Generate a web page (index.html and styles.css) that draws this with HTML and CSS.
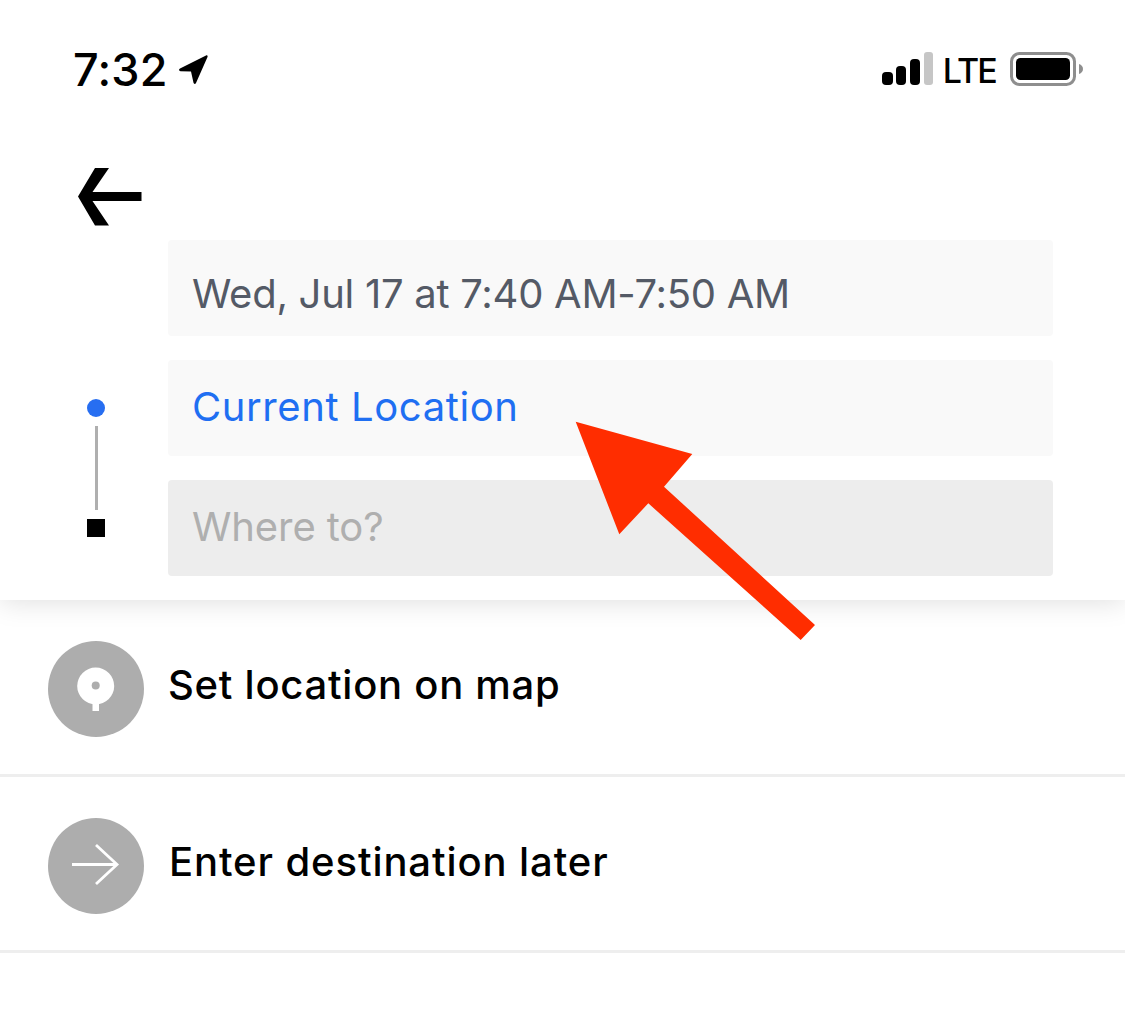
FILE: index.html
```html
<!DOCTYPE html>
<html lang="en">
<head>
<meta charset="utf-8">
<title>Where to?</title>
<link rel="stylesheet" href="styles.css">
</head>
<body>
<div class="page">
  <header class="top">
    <div class="status">
      <div class="status-left">
        <span class="time">7:32</span>
        <svg class="loc" width="32" height="32" viewBox="0 0 32 32"><path d="M3 15.500 29 2.500c1.200-.6 2 .2 1.500 1.500L19 30c-.6 1.300-2.200 1.200-2.500-.2L14 18.500 3.500 18.200c-1.700-.1-2-1.900-.5-2.700Z"/></svg>
      </div>
      <div class="status-right">
        <svg class="bars" width="52" height="34" viewBox="0 0 52 34">
          <rect x="0" y="20" width="11" height="13" rx="4"/>
          <rect x="14" y="14" width="10" height="19" rx="4"/>
          <rect x="28" y="7" width="10" height="26" rx="4"/>
          <rect class="bar-off" x="42" y="0" width="9" height="33" rx="3"/>
        </svg>
        <span class="lte">LTE</span>
        <svg class="battery" width="74" height="34" viewBox="0 0 74 34">
          <rect class="batt-shell" x="1.500" y="1.500" width="63" height="31" rx="8"/>
          <rect x="6" y="6" width="54" height="22" rx="4.500"/>
          <path class="batt-cap" d="M69 12c2.500.8 4 2.700 4 5s-1.500 4.200-4 5Z"/>
        </svg>
      </div>
    </div>
    <div class="nav">
      <svg class="back" width="64" height="58" viewBox="0 0 64 58"><path d="M63.500 24H14.500L31 0H17L0 28.500 17 57.500H31L14.500 33H63.500Z"/></svg>
    </div>
    <div class="form">
      <div class="field field-time">Wed, Jul 17 at 7:40 AM-7:50 AM</div>
      <div class="route">
        <span class="route-dot"></span>
        <span class="route-line"></span>
        <span class="route-end"></span>
      </div>
      <div class="field field-pickup">Current Location</div>
      <div class="field field-dest">Where to?</div>
    </div>
  </header>
  <ul class="options">
    <li class="option">
      <span class="badge">
        <svg width="96" height="96" viewBox="0 0 96 96"><circle class="pin-head" cx="47.700" cy="45" r="18.500"/><rect class="pin-head" x="44.500" y="58" width="6.500" height="12"/><circle class="pin-hole" cx="47.700" cy="44.500" r="4"/></svg>
      </span>
      <span class="option-label">Set location on map</span>
    </li>
    <li class="option">
      <span class="badge">
        <svg width="96" height="96" viewBox="0 0 96 96"><path class="arrow-line" d="M24 46.500h44M48 27l21 19.500L48 66"/></svg>
      </span>
      <span class="option-label">Enter destination later</span>
    </li>
  </ul>
  <svg class="callout" width="1125" height="1035" viewBox="0 0 1125 1035"><polygon points="575.700,421.700 692.300,454 664,486.700 815,625 800.700,640 648.300,503.300 619.300,534.300"/></svg>
</div>
</body>
</html>
```
FILE: styles.css
```css
* { box-sizing: border-box; }
html, body { margin: 0; padding: 0; background: #fff; }
body { font-family: Inter, "Liberation Sans", sans-serif; color: #000; }
.page { position: relative; width: 1125px; height: 1035px; overflow: hidden; }

.top { position: relative; height: 600px; background: #fff; box-shadow: 0 2px 26px rgba(0,0,0,.13); z-index: 1; }
.status { height: 140px; padding: 40px 41px 0 73px; display: flex; justify-content: space-between; align-items: flex-start; }
.status-left { display: flex; align-items: center; gap: 9px; }
.time { font-size: 45px; font-weight: 550; letter-spacing: .2px; line-height: 60px; }
.loc { display: block; margin-top: -2px; }
.status-right { display: flex; align-items: flex-start; margin-top: 12px; }
.bars { display: block; margin-right: 9px; }
.bar-off { fill: #c6c6c6; }
.lte { font-size: 34px; font-weight: 500; letter-spacing: -1.800px; line-height: 34px; margin: 2px 14px 0 0; }
.battery { display: block; }
.batt-shell { fill: none; stroke: #8e8e8e; stroke-width: 3; }
.batt-cap { fill: #8e8e8e; }

.nav { height: 100px; padding: 28px 0 0 78px; }
.back { display: block; }

.form { display: grid; grid-template-columns: 168px 885px; grid-auto-rows: 96px; row-gap: 24px; }
.field { grid-column: 2; display: flex; align-items: center; padding-left: 24px; border-radius: 4px; font-size: 40px; background: #f9f9f9; }
.field-time { grid-row: 1; padding-top: 10px; letter-spacing: -.27px; color: #545a66; }
.field-pickup { grid-row: 2; padding-bottom: 4px; letter-spacing: .6px; color: #1f6ff2; }
.field-dest { grid-row: 3; padding-bottom: 4px; letter-spacing: -.1px; background: #ededed; color: #afafaf; }
.route { grid-column: 1; grid-row: 2 / 4; display: flex; flex-direction: column; align-items: center; padding: 39px 0 0 24px; }
.route-dot { width: 18px; height: 18px; border-radius: 50%; background: #276ef1; }
.route-line { width: 3px; height: 84px; margin: 9px 0; background: #afafaf; }
.route-end { width: 18px; height: 18px; background: #000; }

.options { list-style: none; margin: 0; padding: 0; }
.option { padding: 41px 0 0 48px; border-bottom: 3px solid #eeeeee; display: flex; align-items: flex-start; gap: 24px; }
.option:first-child { height: 177px; }
.option:last-child { height: 176px; }
.option:last-child .option-label { letter-spacing: .9px; margin-left: 1px; }
.badge { display: block; width: 96px; height: 96px; border-radius: 50%; background: #adadad; flex: none; }
.badge svg { display: block; }
.pin-head { fill: #fff; }
.pin-hole { fill: #adadad; }
.arrow-line { fill: none; stroke: #fff; stroke-width: 2.800; }
.option-label { font-size: 40px; font-weight: 500; letter-spacing: .74px; line-height: 88px; }

.callout { position: absolute; left: 0; top: 0; z-index: 2; }
.callout polygon { fill: #ff2d00; }
```
